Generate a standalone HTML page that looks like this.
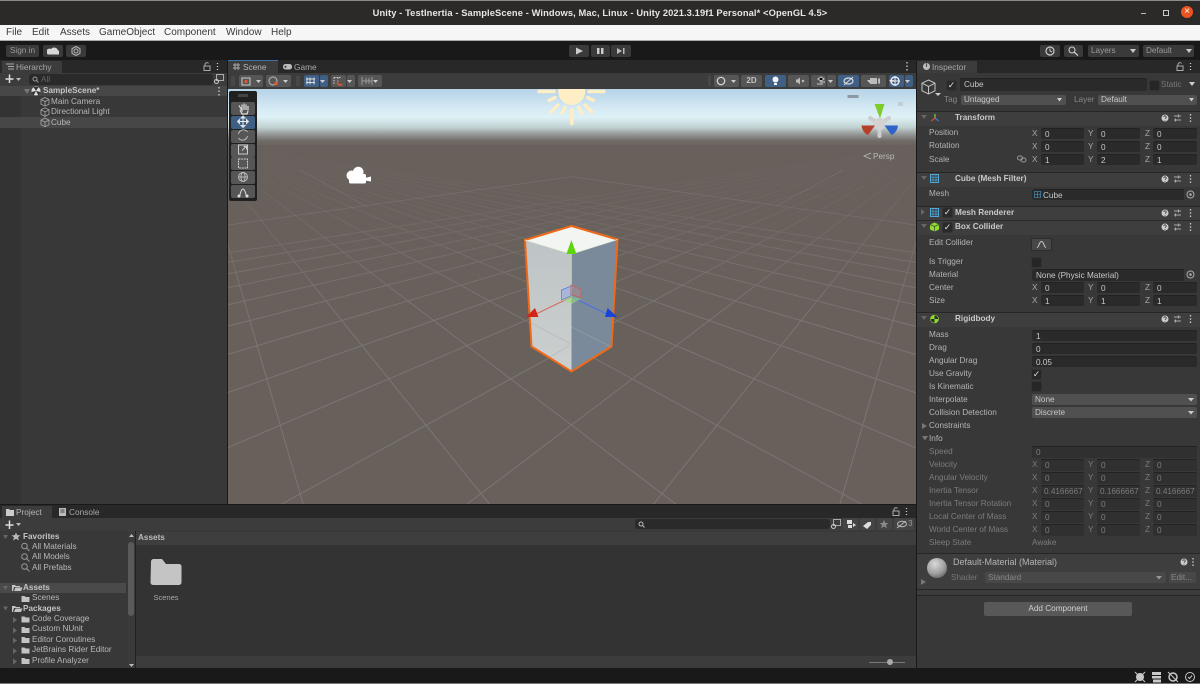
<!DOCTYPE html>
<html><head><meta charset="utf-8"><title>Unity</title>
<style>
html,body{margin:0;padding:0;background:#383838}
#r{position:relative;width:1200px;height:684px;overflow:hidden;background:#383838;font:8.2px/12px "Liberation Sans",sans-serif;color:#b4b4b4;filter:blur(.35px)}
#r div,#r svg{position:absolute}
.t{white-space:nowrap;height:12px}
.l{left:929px;color:#b4b4b4}
.h{left:955px;font-weight:bold;color:#c8c8c8}
.d{color:#7c7c7c}
.ax{color:#a8a8a8}
.f{background:#2a2a2a;height:11px;line-height:11px;border-radius:2px;padding-left:4px;color:#c8c8c8;white-space:nowrap;overflow:hidden;box-sizing:border-box;border-top:1px solid #222}
.x{left:1041px;width:43px}.y{left:1097px;width:43px}.z{left:1153px;width:44px}
.w{left:1032px;width:165px}
.g{color:#7c7c7c;background:#303030}
.dd{background:#505050;height:12px;line-height:12px;border-radius:2px;padding-left:3px;color:#c8c8c8;box-sizing:border-box}
.tb{background:#565656;border-radius:2px}
.hd{left:917px;width:283px;background:#3e3e3e;border-top:1px solid #262626}
.c{background:#262626;border:1px solid #333;box-sizing:border-box;width:11px;height:11px;border-radius:2px;color:#ddd;font-size:9px;line-height:9px;text-align:center}
.m{color:#3a3a3a;font-size:10px;top:26px;height:14px;line-height:14px;white-space:nowrap}
.tr{color:#b8b8b8;white-space:nowrap}
</style></head><body><div id="r">

<!-- Title bar -->
<div style="left:0;top:0;width:1200px;height:25px;background:#2c2a29;border-top:1px solid #8a8a8a;box-sizing:border-box"></div>
<div class="t" style="left:0;width:1200px;top:7px;text-align:center;color:#e6e6e6;font-weight:bold;font-size:9.33px;letter-spacing:.1px">Unity - TestInertia - SampleScene - Windows, Mac, Linux - Unity 2021.3.19f1 Personal* &lt;OpenGL 4.5&gt;</div>
<div style="left:1141px;top:13px;width:5px;height:1px;background:#bbb"></div>
<div style="left:1163px;top:10px;width:4px;height:4px;border:1px solid #ccc"></div>
<div style="left:1181px;top:6px;width:12px;height:12px;border-radius:50%;background:#e95420;color:#fff;font-size:10px;line-height:12px;text-align:center">×</div>

<!-- Menu -->
<div style="left:0;top:25px;width:1200px;height:16px;background:#f6f6f6;border-bottom:1px solid #aaa;box-sizing:border-box"></div>
<div class="m" style="left:6px">File</div><div class="m" style="left:32px">Edit</div><div class="m" style="left:60px">Assets</div><div class="m" style="left:99px">GameObject</div><div class="m" style="left:164px">Component</div><div class="m" style="left:226px">Window</div><div class="m" style="left:271px">Help</div>

<!-- Main toolbar -->
<div style="left:0;top:41px;width:1200px;height:19px;background:#191919"></div>
<div class="tb" style="left:6px;top:45px;width:33px;height:12px;background:#3a3a3a;text-align:center;line-height:12px;color:#999">Sign in</div>
<div class="tb" style="left:43px;top:45px;width:20px;height:12px;background:#3a3a3a"></div>
<svg style="left:47px;top:47px" width="12" height="8"><path d="M1 7.500h10a2 2 0 0 0 0-4 4 4 0 0 0-7-1.500a2.500 2.500 0 0 0-3 5.500z" fill="#d8d8d8"/></svg>
<div class="tb" style="left:66px;top:45px;width:20px;height:12px;background:#3a3a3a"></div>
<svg style="left:71px;top:46px" width="10" height="10"><path d="M5 .5l4 2.200v4.600l-4 2.200-4-2.200v-4.600z" fill="none" stroke="#bbb"/><circle cx="5" cy="5" r="2" fill="none" stroke="#bbb"/></svg>
<div class="tb" style="left:569px;top:45px;width:20px;height:12px;background:#3a3a3a"></div>
<div class="tb" style="left:591px;top:45px;width:19px;height:12px;background:#3a3a3a"></div>
<div class="tb" style="left:611px;top:45px;width:20px;height:12px;background:#3a3a3a"></div>
<svg style="left:569px;top:45px" width="62" height="12"><path d="M7 2.500l7 3.500-7 3.500z" fill="#ccc"/><path d="M28 3h2.500v6H28zM32 3h2.500v6H32z" fill="#ccc"/><path d="M48 3l5 3-5 3zM54 3h1.500v6H54z" fill="#bbb"/></svg>
<div class="tb" style="left:1040px;top:45px;width:20px;height:12px;background:#3a3a3a"></div>
<svg style="left:1045px;top:46px" width="10" height="10"><circle cx="5" cy="5" r="4" fill="none" stroke="#ccc" stroke-width="1.200"/><path d="M5 2.500V5l2 1" fill="none" stroke="#ccc"/></svg>
<div class="tb" style="left:1064px;top:45px;width:19px;height:12px;background:#3a3a3a"></div>
<svg style="left:1068px;top:46px" width="11" height="10"><circle cx="4" cy="4" r="3" fill="none" stroke="#ccc" stroke-width="1.100"/><path d="M6 6l4 3.500" stroke="#ccc" stroke-width="1.300"/></svg>
<div class="tb" style="left:1088px;top:45px;width:51px;height:12px;background:#3a3a3a;padding-left:3px;box-sizing:border-box;line-height:12px;color:#9a9a9a">Layers</div>
<div class="tb" style="left:1143px;top:45px;width:51px;height:12px;background:#3a3a3a;padding-left:3px;box-sizing:border-box;line-height:12px;color:#9a9a9a">Default</div>
<svg style="left:1130px;top:49px" width="66" height="5"><path d="M0 0h6l-3 4zM56 0h6l-3 4z" fill="#ccc"/></svg>

<!-- Hierarchy -->
<div style="left:0;top:60px;width:227px;height:13px;background:#282828"></div>
<div style="left:2px;top:61px;width:60px;height:12px;background:#3c3c3c"></div>
<svg style="left:6px;top:63px" width="8" height="7"><path d="M0 1h8M2 3.500h6M2 6h6" stroke="#aaa"/></svg>
<div class="t" style="left:16px;top:61px;color:#a8a8a8;font-size:8.3px">Hierarchy</div>
<svg style="left:203px;top:62px" width="17" height="9"><path d="M1 4h6v4.500H1z" fill="none" stroke="#aaa"/><path d="M2 4V2a2 2 0 0 1 3.500-.5" fill="none" stroke="#aaa"/><path d="M14.500 1v1M14.500 4v1M14.500 7v1" stroke="#ccc" stroke-width="1.300"/></svg>
<div style="left:0;top:73px;width:227px;height:13px;background:#3c3c3c"></div>
<svg style="left:5px;top:74px" width="18" height="10"><path d="M4.500.5v8.500M.5 5h8" stroke="#e0e0e0" stroke-width="1.500"/><path d="M11 4h5l-2.500 3z" fill="#bbb"/></svg>
<div style="left:29px;top:74px;width:184px;height:11px;background:#2a2a2a;border-radius:3px;color:#666;line-height:11px;padding-left:12px;box-sizing:border-box">All</div>
<svg style="left:32px;top:76px" width="7" height="7"><circle cx="3" cy="3" r="2" fill="none" stroke="#999"/><path d="M4.500 4.500l2 2" stroke="#999"/></svg>
<svg style="left:214px;top:74px" width="10" height="10"><rect x="2.500" y=".5" width="7" height="6" fill="none" stroke="#aaa"/><circle cx="2.500" cy="7.500" r="2" fill="none" stroke="#ccc"/></svg>
<div style="left:0;top:86px;width:227px;height:418px;background:#383838"></div>
<div style="left:0;top:86px;width:21px;height:418px;background:#333"></div>
<div style="left:0;top:86px;width:227px;height:10px;background:#474747"></div>
<div style="left:0;top:117px;width:227px;height:11px;background:#474747"></div>
<svg style="left:24px;top:89px" width="6" height="5"><path d="M0 0h6l-3 5z" fill="#777"/></svg>
<svg style="left:31px;top:86px" width="10" height="10"><circle cx="5" cy="5" r="4.500" fill="#ddd"/><path d="M5 5L2.500 1h5zM5 5l-4.500 1 2 3.500zM5 5l4.500 1-2 3.500z" fill="#333"/></svg>
<div class="t" style="left:43px;top:85px;font-weight:bold;color:#c4c4c4">SampleScene*</div>
<svg style="left:218px;top:87px" width="2" height="9"><path d="M1 0v1.500M1 3.500V5M1 7v1.500" stroke="#ccc" stroke-width="1.300"/></svg>
<svg style="left:40px;top:97px" width="10" height="32" fill="none" stroke="#aaa" stroke-width=".8"><path d="M5 .5l4 2v4.600l-4 2-4-2V2.500zM1 2.500l4 2 4-2M5 4.500v4.600"/><path d="M5 10.800l4 2v4.600l-4 2-4-2v-4.600zM1 12.800l4 2 4-2M5 14.800v4.600"/><path d="M5 21.100l4 2v4.600l-4 2-4-2v-4.600zM1 23.100l4 2 4-2M5 25.100v4.600"/></svg>
<div class="t tr" style="left:51px;top:96px">Main Camera</div>
<div class="t tr" style="left:51px;top:106px">Directional Light</div>
<div class="t tr" style="left:51px;top:117px">Cube</div>

<!-- Scene tabs -->
<div style="left:228px;top:60px;width:689px;height:13px;background:#282828"></div>
<div style="left:228px;top:60px;width:50px;height:13px;background:#3c3c3c;border-top:1px solid #3a72a8;box-sizing:border-box"></div>
<svg style="left:233px;top:63px" width="7" height="7"><path d="M2 0v7M5 0v7M0 2h7M0 5h7" stroke="#aaa"/></svg>
<div class="t" style="left:243px;top:61px;font-size:8.3px;color:#b8b8b8">Scene</div>
<svg style="left:283px;top:64px" width="9" height="6"><rect width="9" height="5.500" rx="2.500" fill="#bbb"/><circle cx="2.500" cy="2.700" r="1" fill="#333"/></svg>
<div class="t" style="left:294px;top:61px;font-size:8.3px;color:#a8a8a8">Game</div>
<svg style="left:906px;top:62px" width="2" height="9"><path d="M1 0v1.500M1 3.500V5M1 7v1.500" stroke="#ccc" stroke-width="1.300"/></svg>

<!-- Scene toolbar -->
<div style="left:228px;top:73px;width:689px;height:16px;background:#3c3c3c"></div>
<div class="tb" style="left:239px;top:75px;width:24px;height:12px"></div>
<div class="tb" style="left:266px;top:75px;width:25px;height:12px"></div>
<div class="tb" style="left:304px;top:75px;width:15px;height:12px;background:#3f5f85"></div>
<div class="tb" style="left:320px;top:75px;width:8px;height:12px;background:#3f5f85"></div>
<div class="tb" style="left:331px;top:75px;width:15px;height:12px"></div>
<div class="tb" style="left:347px;top:75px;width:8px;height:12px"></div>
<div class="tb" style="left:358px;top:75px;width:24px;height:12px"></div>
<svg style="left:228px;top:73px" width="160" height="16"><path d="M4 3v10M6 3v10M69 3v10M71 3v10" stroke="#555"/><rect x="14" y="5" width="8" height="7" fill="none" stroke="#ccc"/><circle cx="18" cy="8.500" r="1.600" fill="#e2572c"/><path d="M28 7h5l-2.500 3zM55 7h5l-2.500 3zM92 7h5l-2.500 3zM119 7h5l-2.500 3zM145 7h5l-2.500 3z" fill="#ccc"/><circle cx="45" cy="8" r="4" fill="none" stroke="#bbb"/><circle cx="48" cy="10.500" r="1.800" fill="#e2572c"/><path d="M79 4.500v7M82 4.500v7M86 4.500v7M78 6h9M78 9.500h9" stroke="#ddd"/><path d="M106 4.500h7M106 4.500v7M110 4.500v3" stroke="#ccc" stroke-dasharray="1.500 1"/><path d="M110 8a2.500 2.500 0 0 0 4 3" stroke="#e2572c" stroke-width="1.500" fill="none"/><path d="M134 4v8M144 4v8M134 8h10M138 5v6M141 5v6" stroke="#999"/></svg>

<div class="tb" style="left:714px;top:75px;width:25px;height:12px"></div>
<div class="tb" style="left:741px;top:75px;width:21px;height:12px;text-align:center;line-height:12px;color:#c4c4c4;font-weight:bold;font-size:8px">2D</div>
<div class="tb" style="left:765px;top:75px;width:21px;height:12px;background:#3f5f85"></div>
<div class="tb" style="left:788px;top:75px;width:21px;height:12px"></div>
<div class="tb" style="left:811px;top:75px;width:15px;height:12px"></div>
<div class="tb" style="left:827px;top:75px;width:9px;height:12px"></div>
<div class="tb" style="left:838px;top:75px;width:21px;height:12px;background:#3f5f85"></div>
<div class="tb" style="left:861px;top:75px;width:25px;height:12px"></div>
<div class="tb" style="left:889px;top:75px;width:15px;height:12px;background:#3f5f85"></div>
<div class="tb" style="left:905px;top:75px;width:8px;height:12px;background:#3f5f85"></div>
<svg style="left:708px;top:73px" width="209" height="16"><path d="M0 3v10M2 3v10" stroke="#555"/><circle cx="13" cy="8" r="3.700" fill="none" stroke="#ddd" stroke-width="1.200"/><path d="M23 7h5l-2.500 3zM181 7h5l-2.500 3zM159 7h5l-2.500 3zM120 7h5l-2.500 3zM197 7h5l-2.500 3z" fill="#ccc"/><circle cx="67.500" cy="6.500" r="3" fill="#f4f4f4"/><rect x="66" y="10" width="3" height="2" fill="#f4f4f4"/><path d="M88 6.500h1.500L92 4.500v7l-2.500-2H88z" fill="#bbb"/><path d="M94 7l2 2M96 7l-2 2" stroke="#bbb"/><path d="M110 6l3-2 3 2-3 2zM112 9h5M109 11h6" stroke="#ccc"/><ellipse cx="140.500" cy="8" rx="4.500" ry="3" fill="none" stroke="#ddd" stroke-width="1.200"/><path d="M136 12l9-8" stroke="#ddd"/><rect x="162" y="5" width="7" height="6" fill="#bbb"/><path d="M170 6l2-1v6l-2-1z" fill="#bbb"/><circle cx="187" cy="8" r="4" fill="none" stroke="#eee" stroke-width="1.400"/><path d="M187 3v10M182 8h10" stroke="#eee"/></svg>

<!-- Scene view -->
<svg style="left:228px;top:89px" width="688" height="415" viewBox="228 89 688 415">
<defs><linearGradient id="sky" x1="0" y1="0" x2="0" y2="1"><stop offset="0" stop-color="#b6d3e8"/><stop offset=".33" stop-color="#d4e9f3"/><stop offset=".5" stop-color="#def2f6"/><stop offset=".68" stop-color="#c3d3d4"/><stop offset=".8" stop-color="#979c9b"/><stop offset=".93" stop-color="#706a67"/><stop offset="1" stop-color="#6b6460"/></linearGradient>
<linearGradient id="lf" x1="0" y1="0" x2="0" y2="1"><stop offset="0" stop-color="#bec4c6"/><stop offset="1" stop-color="#cbcfce"/></linearGradient>
<linearGradient id="gl" gradientUnits="userSpaceOnUse" x1="0" y1="145" x2="0" y2="320"><stop offset="0" stop-color="#807a76" stop-opacity="0"/><stop offset=".3" stop-color="#807a76" stop-opacity=".22"/><stop offset=".6" stop-color="#807a76" stop-opacity=".5"/><stop offset="1" stop-color="#807a76" stop-opacity=".8"/></linearGradient>
<linearGradient id="gm" gradientUnits="userSpaceOnUse" x1="0" y1="150" x2="0" y2="320"><stop offset="0" stop-color="#7a7470" stop-opacity="0"/><stop offset=".45" stop-color="#7a7470" stop-opacity=".22"/><stop offset="1" stop-color="#7a7470" stop-opacity="0"/></linearGradient></defs>
<rect x="228" y="89" width="688" height="415" fill="#68605b"/>
<rect x="228" y="89" width="688" height="56" fill="url(#sky)"/>
<!-- minor grid -->
<path stroke="url(#gm)" stroke-width=".8" fill="none" d="M198 141.700L217 700M198 141.700L503 700M198 141.700L790 700M198 141.700L1077 700M198 141.700L1364 700M198 141.700L1651 700M198 141.700L1937 700M198 141.700L2224 700M198 141.700L2511 700M198 141.700L2798 700M945 141.700L926 700M945 141.700L640 700M945 141.700L353 700M945 141.700L66 700M945 141.700L-221 700M945 141.700L-508 700M945 141.700L-794 700M945 141.700L-1081 700M945 141.700L-1368 700M945 141.700L-1655 700"/>
<!-- major grid -->
<path stroke="url(#gl)" stroke-width="1" fill="none" d="M198 141.700L-500 700M198 141.700L-214 700M198 141.700L73 700M198 141.700L360 700M198 141.700L647 700M198 141.700L934 700M198 141.700L1220 700M198 141.700L1507 700M198 141.700L1794 700M198 141.700L2081 700M198 141.700L2368 700M198 141.700L2654 700M198 141.700L2941 700M198 141.700L3228 700M198 141.700L3515 700M198 141.700L3802 700M945 141.700L1643 700M945 141.700L1357 700M945 141.700L1070 700M945 141.700L783 700M945 141.700L496 700M945 141.700L209 700M945 141.700L-77 700M945 141.700L-364 700M945 141.700L-651 700M945 141.700L-938 700M945 141.700L-1225 700M945 141.700L-1511 700M945 141.700L-1798 700M945 141.700L-2085 700M945 141.700L-2372 700M945 141.700L-2659 700"/>
<path d="M228 225L571.500 176.700 916 225M300 170L366 206M843 170L776 206" stroke="#7d7773" stroke-width=".9" fill="none" opacity=".6"/>
<!-- cube -->
<path d="M525 240L571.500 254V371.500L531.500 346.500z" fill="url(#lf)"/>
<path d="M617.500 239.500L571.500 254V371.500L611.500 346.500z" fill="#7b8a9a"/>
<path d="M571.500 226L617.500 239.500 571.500 254 525 240z" fill="#f2f5f1"/>
<path d="M531 323l39 20.500M550 357l20-12M571.500 327l40 20" stroke="#a0a5a8" stroke-width=".7" opacity=".6" fill="none"/>
<path d="M571.500 226L617.500 239.500 611.500 346.500 571.500 371.500 531.500 346.500 525 240z" fill="none" stroke="#f0691a" stroke-width="2"/>
<path d="M525 240L571.500 254 617.500 239.500" fill="none" stroke="#e4f0dc" stroke-width=".8"/>
<!-- move gizmo -->
<path d="M571.400 254V297" stroke="#a2e08a" stroke-width="1"/>
<path d="M571.400 297L534 315" stroke="#d66a62" stroke-width="1"/>
<path d="M571.400 297L609 315" stroke="#4b6fe4" stroke-width="1"/>
<path d="M571.400 240l5 14h-10z" fill="#5fd60c"/>
<path d="M526 317l9-9 3.500 9z" fill="#d42319"/>
<path d="M617.500 317l-10-9-2.500 9z" fill="#1a43d8"/>
<path d="M561.500 290l9.500-4v10l-9.500 4z" fill="#8fa3e8" fill-opacity=".5" stroke="#5b73e0" stroke-width=".7"/>
<path d="M571 285l10 4.500v8l-10-3z" fill="#cf8f8a" fill-opacity=".3" stroke="#d15b52" stroke-width=".7"/>
<path d="M562 300l9.500-4 9.500 3-9.500 5z" fill="#9be07a" fill-opacity=".55"/>
<!-- sun -->
<g stroke="#fdeec6" stroke-width="3.400" stroke-linecap="round" fill="none">
<path d="M539 91.500h15M589 91.500h15M549 100.500l6-3M587.500 97.500l6 3M551 112l7-7M585 105l7 7M562 113l3-6M578.500 107l3 6M571.700 110v13.500"/></g>
<circle cx="571.700" cy="91.500" r="13.500" fill="#fdeec6"/>
<!-- camera icon -->
<g fill="#fff"><circle cx="351.500" cy="175.500" r="5"/><circle cx="358.300" cy="172" r="5.300"/><rect x="349" y="174" width="17" height="9.500" rx="1.500"/><path d="M365 178l6-1.500v5l-6-1z"/></g>
<!-- view gizmo -->
<rect x="847.500" y="95" width="11" height="3" fill="#8c99a3"/>
<g stroke="#cdcdcd" stroke-width="4" stroke-linecap="round"><path d="M879.500 124L870 118M879.500 124L889 118M879.500 124V136"/></g>
<circle cx="879.500" cy="124" r="6" fill="#d2d2d2"/>
<path d="M874.500 104h10L880 118.500z" fill="#7ecb2a"/>
<path d="M861.500 125.500l13.500 0-7 9.500c-3-1-6-5-6.500-9.500z" fill="#b5402a"/>
<path d="M898 125.500l-13.500 0 7 9.500c3-1 6-5 6.500-9.500z" fill="#2d62c9"/>
<path d="M876 100l2 3 2-3" stroke="#c8d6da" fill="none" stroke-width=".8"/>
<rect x="898" y="102" width="5" height="4" fill="#c4cdd0"/>
<path d="M871 153l-7 3 7 3" stroke="#bbb" fill="none" stroke-width=".8"/>
<text x="873" y="159" font-family="Liberation Sans" font-size="8.200" fill="#bdb9b6">Persp</text>
</svg>

<!-- Tools overlay -->
<div style="left:229px;top:91px;width:28px;height:110px;background:#202020;border-radius:2px"></div>
<div style="left:238px;top:94px;width:10px;height:3px;background:#444"></div>
<div class="tb" style="left:231px;top:102px;width:24px;height:13px"></div>
<div class="tb" style="left:231px;top:116px;width:24px;height:13px;background:#3f5f85"></div>
<div class="tb" style="left:231px;top:130px;width:24px;height:13px"></div>
<div class="tb" style="left:231px;top:143.500px;width:24px;height:13px"></div>
<div class="tb" style="left:231px;top:157px;width:24px;height:13px"></div>
<div class="tb" style="left:231px;top:170.500px;width:24px;height:13px"></div>
<div class="tb" style="left:231px;top:185px;width:24px;height:13px"></div>
<svg style="left:231px;top:102px" width="24" height="96" fill="none" stroke="#ddd">
<path d="M8 3.500l3 5V2.500M13 8V1.500M15 8V2.500M17 8.500V4M9 8l2 4h5l1-3" stroke-width="1.200"/>
<path d="M12 15.500v8M8 19.500h8" stroke="#eee"/><path d="M12 14l-2 2h4zM12 25.500l-2-2h4zM6.500 19.500l2-2v4zM17.500 19.500l-2-2v4z" fill="#eee"/>
<path d="M16.500 30a5 5 0 0 0-9 2M7.500 36a5 5 0 0 0 9-2" stroke="#bbb"/>
<rect x="7.500" y="43" width="9" height="9" stroke="#ccc"/><path d="M11 48.500l4-4M12.500 44.500H15.500V47.500" stroke="#ccc"/>
<rect x="7.500" y="57" width="9" height="9" stroke="#ccc" stroke-dasharray="2 .7"/>
<circle cx="12" cy="75" r="4.500" stroke="#bbb"/><ellipse cx="12" cy="75" rx="2" ry="4.500" stroke="#bbb"/><path d="M7.500 75h9" stroke="#bbb"/>
<path d="M8 94c1.500 0 1.500-7 4-7s2.500 7 4 7" stroke="#ddd"/><circle cx="8" cy="94" r="1" fill="#ddd"/><circle cx="16" cy="94" r="1" fill="#ddd"/>
</svg>

<!-- Divider lines -->
<div style="left:227px;top:60px;width:1px;height:445px;background:#191919"></div>
<div style="left:916px;top:60px;width:1px;height:608px;background:#191919"></div>
<div style="left:0;top:504px;width:916px;height:1px;background:#191919"></div>

<!-- Project panel -->
<div style="left:0;top:505px;width:916px;height:13px;background:#282828"></div>
<div style="left:2px;top:506px;width:50px;height:12px;background:#3c3c3c"></div>
<svg style="left:6px;top:509px" width="8" height="7"><path d="M0 0h3l1 1h4v6H0z" fill="#ccc"/></svg>
<div class="t" style="left:16px;top:506px;font-size:8.3px;color:#b8b8b8">Project</div>
<svg style="left:59px;top:508px" width="7" height="8"><path d="M0 0h7v8H0z" fill="#bbb"/><path d="M1.500 2h4M1.500 4h4" stroke="#444"/></svg>
<div class="t" style="left:69px;top:506px;font-size:8.3px;color:#a8a8a8">Console</div>
<svg style="left:892px;top:507px" width="17" height="9"><path d="M1 4h6v4.500H1z" fill="none" stroke="#aaa"/><path d="M2 4V2a2 2 0 0 1 3.500-.5" fill="none" stroke="#aaa"/><path d="M14.500 1v1M14.500 4v1M14.500 7v1" stroke="#ccc" stroke-width="1.300"/></svg>
<div style="left:0;top:518px;width:916px;height:13px;background:#3c3c3c"></div>
<svg style="left:5px;top:520px" width="18" height="10"><path d="M4.500.5v8.500M.5 5h8" stroke="#e0e0e0" stroke-width="1.500"/><path d="M11 3h5l-2.500 3z" fill="#bbb"/></svg>
<div style="left:635px;top:519px;width:195px;height:10px;background:#2a2a2a;border-radius:3px"></div>
<svg style="left:638px;top:521px" width="7" height="7"><circle cx="3" cy="3" r="2" fill="none" stroke="#bbb"/><path d="M4.500 4.500l2 2" stroke="#bbb"/></svg>
<svg style="left:831px;top:519px" width="10" height="10"><rect x="2.500" y=".5" width="7" height="6" fill="none" stroke="#aaa"/><circle cx="2.500" cy="7.500" r="2" fill="none" stroke="#ccc"/></svg>
<div class="tb" style="left:843px;top:518px;width:15px;height:12px;background:#444"></div>
<div class="tb" style="left:860px;top:518px;width:15px;height:12px;background:#444"></div>
<div class="tb" style="left:877px;top:518px;width:15px;height:12px;background:#444"></div>
<div class="tb" style="left:894px;top:518px;width:20px;height:12px;background:#444"></div>
<svg style="left:843px;top:518px" width="73" height="12"><path d="M4 2h5v4H4zM10 5l3 2-3 2zM5 7h4v3H5z" fill="#ddd"/><path d="M20 8l5-4h3v3l-4 4z" fill="#ddd"/><path d="M41 2l1.500 3h3l-2.500 2 1 3.200-3-1.700-3 1.700 1-3.200-2.500-2h3z" fill="#888"/><ellipse cx="59" cy="6" rx="4.500" ry="2.800" fill="none" stroke="#bbb"/><path d="M54 10l9-7" stroke="#bbb"/></svg>
<div class="t" style="left:908px;top:518px;color:#999">3</div>
<!-- tree -->
<div style="left:0;top:531px;width:128px;height:137px;background:#383838"></div>
<div style="left:0;top:583px;width:126px;height:10px;background:#4a4a4a"></div>
<div style="left:128px;top:531px;width:7px;height:137px;background:#3a3a3a"></div>
<div style="left:128px;top:542px;width:6px;height:74px;background:#5a5a5a;border-radius:3px"></div>
<svg style="left:129px;top:534px" width="5" height="133"><path d="M2.500 0l2.500 3H0zM0 130h5l-2.500 3z" fill="#bbb"/></svg>
<svg style="left:3px;top:532px" width="60" height="136">
<path d="M0 3h5l-2.500 4zM0 54h5l-2.500 4zM0 74.500h5l-2.500 4z" fill="#666"/>
<path d="M13 .5l1.300 2.800h3.200l-2.500 2 .9 3.200-2.900-1.800-2.900 1.800.9-3.200-2.500-2h3.200z" fill="#bbb"/>
<g fill="none" stroke="#999"><circle cx="21.500" cy="14" r="2.800"/><path d="M23.500 16l3 3"/><circle cx="21.500" cy="24.500" r="2.800"/><path d="M23.500 26.500l3 3"/><circle cx="21.500" cy="34.500" r="2.800"/><path d="M23.500 36.500l3 3"/></g>
<path d="M9 53h3l1 1h4v1h-6l-1 4H9zM11 59l1.500-3.500h7L18 59z" fill="#c4c4c4"/>
<path d="M18.500 64h3l1 1h4v5h-8z" fill="#c4c4c4"/>
<path d="M9 74h3l1 1h4v1h-6l-1 4H9zM11 80l1.500-3.500h7L18 80z" fill="#c4c4c4"/>
<g fill="#c4c4c4"><path d="M18.500 84.500h3l1 1h4v5h-8zM18.500 95h3l1 1h4v5h-8zM18.500 105h3l1 1h4v5h-8zM18.500 115.500h3l1 1h4v5h-8zM18.500 126h3l1 1h4v5h-8z"/></g>
<g fill="#666"><path d="M10 85l4 3-4 3zM10 95.500l4 3-4 3zM10 105.500l4 3-4 3zM10 116l4 3-4 3zM10 126.500l4 3-4 3z"/></g>
</svg>
<div class="t" style="left:23px;top:531px;font-weight:bold;color:#c4c4c4">Favorites</div>
<div class="t tr" style="left:32px;top:541px">All Materials</div>
<div class="t tr" style="left:32px;top:551px">All Models</div>
<div class="t tr" style="left:32px;top:562px">All Prefabs</div>
<div class="t" style="left:23px;top:582px;font-weight:bold;color:#c4c4c4">Assets</div>
<div class="t tr" style="left:32px;top:592px">Scenes</div>
<div class="t" style="left:23px;top:603px;font-weight:bold;color:#c4c4c4">Packages</div>
<div class="t tr" style="left:32px;top:613px">Code Coverage</div>
<div class="t tr" style="left:32px;top:623px">Custom NUnit</div>
<div class="t tr" style="left:32px;top:634px">Editor Coroutines</div>
<div class="t tr" style="left:32px;top:644px">JetBrains Rider Editor</div>
<div class="t tr" style="left:32px;top:655px">Profile Analyzer</div>
<div style="left:0;top:668px;width:1200px;height:16px;background:#191919"></div>
<!-- grid area -->
<div style="left:135px;top:531px;width:1px;height:137px;background:#222"></div>
<div style="left:136px;top:532px;width:780px;height:13px;background:#3e3e3e"></div>
<div class="t" style="left:138px;top:532px;font-weight:bold;color:#bcbcbc">Assets</div>
<div style="left:136px;top:545px;width:780px;height:111px;background:#333"></div>
<svg style="left:150px;top:559px" width="32" height="27"><path d="M1 3a3 3 0 0 1 2-3h9l4 5h13a2.500 2.500 0 0 1 2.500 2.500v16a2.500 2.500 0 0 1-2.500 2.500H3a2.500 2.500 0 0 1-2.500-2.500z" fill="#c4c4c4"/></svg>
<div class="t" style="left:153.500px;top:592px;font-size:7.500px;color:#a8a8a8">Scenes</div>
<div style="left:136px;top:656px;width:780px;height:12px;background:#3c3c3c"></div>
<div style="left:869px;top:662px;width:36px;height:1px;background:#777"></div>
<div style="left:887px;top:659px;width:6px;height:6px;border-radius:50%;background:#aaa"></div>

<!-- Inspector -->
<div style="left:917px;top:60px;width:283px;height:13px;background:#282828"></div>
<div style="left:917px;top:61px;width:60px;height:12px;background:#3c3c3c"></div>
<div style="left:923px;top:63px;width:7px;height:7px;border-radius:50%;background:#bbb;color:#333;font-size:6px;line-height:7px;text-align:center;font-weight:bold">i</div>
<div class="t" style="left:932px;top:61px;font-size:8.3px;color:#a8a8a8">Inspector</div>
<svg style="left:1176px;top:62px" width="17" height="9"><path d="M1 4h6v4.500H1z" fill="none" stroke="#aaa"/><path d="M2 4V2a2 2 0 0 1 3.500-.5" fill="none" stroke="#aaa"/><path d="M14.500 1v1M14.500 4v1M14.500 7v1" stroke="#ccc" stroke-width="1.300"/></svg>
<svg style="left:921px;top:79px" width="20" height="19" fill="none" stroke="#c4c4c4"><path d="M7.500 1l6.500 3.200v7.600L7.500 15 1 11.800V4.200zM1 4.200l6.500 3.200L14 4.200M7.500 7.400V15"/><path d="M14 14h6l-3 3z" fill="#ccc" stroke="none"/></svg>
<div class="c" style="left:946px;top:80px;color:#ddd;background:#2a2a2a">✓</div>
<div class="f" style="left:960px;top:78px;width:187px;height:13px;line-height:12px;color:#c8c8c8">Cube</div>
<div class="c" style="left:1149px;top:80px">&nbsp;</div>
<div class="t" style="left:1161px;top:79px;color:#777">Static</div>
<svg style="left:1189px;top:82px" width="6" height="4"><path d="M0 0h6l-3 4z" fill="#ccc"/></svg>
<div class="t" style="left:944px;top:94px;color:#888;">Tag</div>
<div class="dd" style="left:961px;top:95px;width:105px;height:10px;line-height:10px">Untagged</div>
<div class="t" style="left:1074px;top:94px;color:#888">Layer</div>
<div class="dd" style="left:1098px;top:95px;width:99px;height:10px;line-height:10px">Default</div>
<svg style="left:1057px;top:98px" width="140" height="4"><path d="M0 0h5l-2.500 3.500zM132 0h5l-2.500 3.500z" fill="#ccc"/></svg>

<!-- Transform -->
<div class="hd" style="top:111px;height:14px"></div>
<svg style="left:920px;top:113px" width="20" height="10"><path d="M1 2h6L4 6z" fill="#666"/><path d="M15 5V1" stroke="#7ccb2c" stroke-width="1.300"/><path d="M15 5l-3.500 3" stroke="#d44" stroke-width="1.300"/><path d="M15 5l3.500 3" stroke="#3a7bd5" stroke-width="1.300"/></svg>
<div class="t h" style="top:112px">Transform</div>
<div class="t l" style="top:127px">Position</div>
<div class="t l" style="top:140px">Rotation</div>
<div class="t l" style="top:154px">Scale</div>
<svg style="left:1017px;top:155px" width="10" height="8" fill="none" stroke="#999"><rect x=".5" y="1" width="5" height="4" rx="2"/><rect x="4" y="3" width="5" height="4" rx="2"/></svg>
<div class="t ax" style="left:1032px;top:127.500px">X</div><div class="f x" style="top:128px">0</div><div class="t ax" style="left:1088px;top:127.500px">Y</div><div class="f y" style="top:128px">0</div><div class="t ax" style="left:1145px;top:127.500px">Z</div><div class="f z" style="top:128px">0</div>
<div class="t ax" style="left:1032px;top:140.500px">X</div><div class="f x" style="top:141px">0</div><div class="t ax" style="left:1088px;top:140.500px">Y</div><div class="f y" style="top:141px">0</div><div class="t ax" style="left:1145px;top:140.500px">Z</div><div class="f z" style="top:141px">0</div>
<div class="t ax" style="left:1032px;top:153.500px">X</div><div class="f x" style="top:154px">1</div><div class="t ax" style="left:1088px;top:153.500px">Y</div><div class="f y" style="top:154px">2</div><div class="t ax" style="left:1145px;top:153.500px">Z</div><div class="f z" style="top:154px">1</div>

<!-- Mesh filter -->
<div class="hd" style="top:172px;height:14px"></div>
<svg style="left:920px;top:174px" width="20" height="10"><path d="M1 2h6L4 6z" fill="#666"/><rect x="10.500" y=".5" width="8" height="8" fill="none" stroke="#4fa8d8"/><path d="M13 .5v8M16 .5v8M10.500 3.200h8M10.500 6h8" stroke="#4fa8d8" stroke-width=".7"/></svg>
<div class="t h" style="top:173px">Cube (Mesh Filter)</div>
<div class="t l" style="top:188px">Mesh</div>
<div class="f w" style="top:189px;padding-left:11px;height:11px;border-radius:3px;background:#2a2a2a">Cube</div>
<svg style="left:1034px;top:191px" width="7" height="7"><path d="M0 .5h7M0 3.500h7M0 6.500h7M.5 0v7M3.500 0v7M6.500 0v7" stroke="#3f7fa6" stroke-width=".8"/></svg>
<div style="left:1184px;top:189px;width:13px;height:11px;background:#383838"></div>
<svg style="left:1186px;top:190px" width="9" height="9"><circle cx="4.500" cy="4.500" r="3.500" fill="none" stroke="#aaa"/><circle cx="4.500" cy="4.500" r="1.300" fill="#aaa"/></svg>

<!-- Mesh renderer -->
<div class="hd" style="top:206px;height:14px"></div>
<svg style="left:920px;top:208px" width="20" height="10"><path d="M1 1l4 3-4 3z" fill="#666"/><rect x="10.500" y=".5" width="8" height="8" fill="none" stroke="#4fa8d8"/><path d="M13 .5v8M16 .5v8M10.500 3.200h8M10.500 6h8" stroke="#4fa8d8" stroke-width=".7"/></svg>
<div class="c" style="left:942px;top:207px;background:#2a2a2a">✓</div>
<div class="t h" style="top:207px">Mesh Renderer</div>

<!-- Box collider -->
<div class="hd" style="top:220px;height:14px;border-top:1px solid #2a2a2a"></div>
<svg style="left:920px;top:222px" width="20" height="10"><path d="M1 2h6L4 6z" fill="#666"/><path d="M14.500 .5l4.500 2v5l-4.500 2-4.500-2v-5z" fill="#8fdc2c"/><path d="M10 2.500l4.500 2 4.500-2M14.500 4.500v5" stroke="#3e3e3e" stroke-width=".7" fill="none"/></svg>
<div class="c" style="left:942px;top:222px;background:#2a2a2a">✓</div>
<div class="t h" style="top:221px">Box Collider</div>
<div class="t l" style="top:237px">Edit Collider</div>
<div class="tb" style="left:1031px;top:238px;width:21px;height:13px;background:#484848;border:1px solid #2c2c2c;box-sizing:border-box"></div>
<svg style="left:1036px;top:240px" width="11" height="9" fill="none" stroke="#ccc"><path d="M1 7.500c2 0 2-6 4.500-6s2.500 6 4.500 6"/></svg>
<div class="t l" style="top:256px">Is Trigger</div>
<div class="c" style="left:1031px;top:257px">&nbsp;</div>
<div class="t l" style="top:269px">Material</div>
<div class="f w" style="top:269px;height:12px;line-height:11px;border-radius:3px">None (Physic Material)</div>
<div style="left:1184px;top:269px;width:13px;height:12px;background:#383838"></div>
<svg style="left:1186px;top:270px" width="9" height="9"><circle cx="4.500" cy="4.500" r="3.500" fill="none" stroke="#aaa"/><circle cx="4.500" cy="4.500" r="1.300" fill="#aaa"/></svg>
<div class="t l" style="top:281.500px">Center</div>
<div class="t l" style="top:294.500px">Size</div>
<div class="t ax" style="left:1032px;top:281.500px">X</div><div class="f x" style="top:282px">0</div><div class="t ax" style="left:1088px;top:281.500px">Y</div><div class="f y" style="top:282px">0</div><div class="t ax" style="left:1145px;top:281.500px">Z</div><div class="f z" style="top:282px">0</div>
<div class="t ax" style="left:1032px;top:294.500px">X</div><div class="f x" style="top:295px">1</div><div class="t ax" style="left:1088px;top:294.500px">Y</div><div class="f y" style="top:295px">1</div><div class="t ax" style="left:1145px;top:294.500px">Z</div><div class="f z" style="top:295px">1</div>

<!-- Rigidbody -->
<div class="hd" style="top:312px;height:14px"></div>
<svg style="left:920px;top:314px" width="20" height="10"><path d="M1 2h6L4 6z" fill="#666"/><circle cx="14.500" cy="5" r="4.300" fill="#8fdc2c"/><path d="M14.500 5V1.300A3.700 3.700 0 0 1 18.200 5zM14.500 5v3.700A3.700 3.700 0 0 1 10.800 5z" fill="#2d2d2d"/></svg>
<div class="t h" style="top:313px">Rigidbody</div>
<div class="t l" style="top:329px">Mass</div><div class="f w" style="top:329.500px;height:11px">1</div>
<div class="t l" style="top:342px">Drag</div><div class="f w" style="top:342.500px;height:11px">0</div>
<div class="t l" style="top:355px">Angular Drag</div><div class="f w" style="top:355.500px;height:11px">0.05</div>
<div class="t l" style="top:368px">Use Gravity</div><div class="c" style="left:1031px;top:369px">✓</div>
<div class="t l" style="top:381px">Is Kinematic</div><div class="c" style="left:1031px;top:381px">&nbsp;</div>
<div class="t l" style="top:394px">Interpolate</div><div class="dd" style="left:1032px;top:394px;width:165px;height:11px;line-height:11px">None</div>
<div class="t l" style="top:407px">Collision Detection</div><div class="dd" style="left:1032px;top:407px;width:165px;height:11px;line-height:11px">Discrete</div>
<svg style="left:1188px;top:398px" width="6" height="17"><path d="M0 0h6l-3 3.500zM0 13h6l-3 3.500z" fill="#ccc"/></svg>
<svg style="left:922px;top:423px" width="6" height="19"><path d="M0 0l5 3-5 3z" fill="#777"/><path d="M0 13h6l-3 4.500z" fill="#777"/></svg>
<div class="t l" style="top:420px">Constraints</div>
<div class="t l" style="top:433px">Info</div>
<div class="t l d" style="top:446px">Speed</div><div class="f w g" style="top:446px;height:12px">0</div>
<div class="t l d" style="top:459px">Velocity</div>
<div class="t l d" style="top:472px">Angular Velocity</div>
<div class="t l d" style="top:485px">Inertia Tensor</div>
<div class="t l d" style="top:498px">Inertia Tensor Rotation</div>
<div class="t l d" style="top:511px">Local Center of Mass</div>
<div class="t l d" style="top:524px">World Center of Mass</div>
<div class="t l d" style="top:537px">Sleep State</div>
<div class="t d" style="left:1032px;top:537px">Awake</div>
<div class="t d" style="left:1032px;top:459px">X</div><div class="f x g" style="top:459px;height:12px">0</div><div class="t d" style="left:1088px;top:459px">Y</div><div class="f y g" style="top:459px;height:12px">0</div><div class="t d" style="left:1145px;top:459px">Z</div><div class="f z g" style="top:459px;height:12px">0</div>
<div class="t d" style="left:1032px;top:472px">X</div><div class="f x g" style="top:472px;height:12px">0</div><div class="t d" style="left:1088px;top:472px">Y</div><div class="f y g" style="top:472px;height:12px">0</div><div class="t d" style="left:1145px;top:472px">Z</div><div class="f z g" style="top:472px;height:12px">0</div>
<div class="t d" style="left:1032px;top:485px">X</div><div class="f x g" style="top:485px;height:12px;padding-left:3px">0.4166667</div><div class="t d" style="left:1088px;top:485px">Y</div><div class="f y g" style="top:485px;height:12px;padding-left:3px">0.1666667</div><div class="t d" style="left:1145px;top:485px">Z</div><div class="f z g" style="top:485px;height:12px;padding-left:3px">0.4166667</div>
<div class="t d" style="left:1032px;top:498px">X</div><div class="f x g" style="top:498px;height:12px">0</div><div class="t d" style="left:1088px;top:498px">Y</div><div class="f y g" style="top:498px;height:12px">0</div><div class="t d" style="left:1145px;top:498px">Z</div><div class="f z g" style="top:498px;height:12px">0</div>
<div class="t d" style="left:1032px;top:511px">X</div><div class="f x g" style="top:511px;height:12px">0</div><div class="t d" style="left:1088px;top:511px">Y</div><div class="f y g" style="top:511px;height:12px">0</div><div class="t d" style="left:1145px;top:511px">Z</div><div class="f z g" style="top:511px;height:12px">0</div>
<div class="t d" style="left:1032px;top:524px">X</div><div class="f x g" style="top:524px;height:12px">0</div><div class="t d" style="left:1088px;top:524px">Y</div><div class="f y g" style="top:524px;height:12px">0</div><div class="t d" style="left:1145px;top:524px">Z</div><div class="f z g" style="top:524px;height:12px">0</div>

<!-- Material -->
<div style="left:917px;top:553px;width:283px;height:37px;background:#3e3e3e;border-top:1px solid #262626;border-bottom:1px solid #262626;box-sizing:border-box"></div>
<div style="left:917px;top:590px;width:283px;height:6px;background:#3c3c3c;border-bottom:1px solid #262626;box-sizing:border-box"></div>
<svg style="left:926px;top:557px" width="22" height="22"><defs><radialGradient id="sp" cx=".4" cy=".3" r=".8"><stop offset="0" stop-color="#d8d8d8"/><stop offset=".6" stop-color="#a0a0a0"/><stop offset="1" stop-color="#5c5c5c"/></radialGradient></defs><circle cx="11" cy="11" r="10" fill="url(#sp)"/></svg>
<svg style="left:921px;top:579px" width="6" height="7"><path d="M0 0l5 3-5 3z" fill="#777"/></svg>
<div class="t" style="left:953px;top:556px;font-size:9px;color:#b4b4b4">Default-Material (Material)</div>
<div class="t" style="left:951px;top:572px;color:#777">Shader</div>
<div class="dd" style="left:985px;top:572px;width:181px;height:11px;line-height:11px;background:#484848;color:#888">Standard</div>
<svg style="left:1156px;top:576px" width="6" height="4"><path d="M0 0h6l-3 3.500z" fill="#999"/></svg>
<div class="dd" style="left:1169px;top:572px;width:27px;height:11px;line-height:11px;background:#484848;color:#888;padding-left:2px">Edit...</div>
<div class="tb" style="left:984px;top:602px;width:148px;height:14px;background:#585858;color:#d0d0d0;text-align:center;line-height:14px">Add Component</div>

<!-- Inspector header icons -->
<svg style="left:1160px;top:113px" width="36" height="10"><circle cx="5" cy="5" r="3.500" fill="#ccc"/><path d="M3.800 4a1.200 1.200 0 1 1 1.700 1.100L5 5.800M5 7v.7" stroke="#3e3e3e" stroke-width=".8" fill="none"/><path d="M14 3h7M14 7h7M18.500 1.500v3M15.500 5.500v3" stroke="#aaa"/><path d="M30.500 1v1.500M30.500 4.200v1.500M30.500 7.500V9" stroke="#ccc" stroke-width="1.300"/></svg>
<svg style="left:1160px;top:174px" width="36" height="10"><circle cx="5" cy="5" r="3.500" fill="#ccc"/><path d="M3.800 4a1.200 1.200 0 1 1 1.700 1.100L5 5.800M5 7v.7" stroke="#3e3e3e" stroke-width=".8" fill="none"/><path d="M14 3h7M14 7h7M18.500 1.500v3M15.500 5.500v3" stroke="#aaa"/><path d="M30.500 1v1.500M30.500 4.200v1.500M30.500 7.500V9" stroke="#ccc" stroke-width="1.300"/></svg>
<svg style="left:1160px;top:208px" width="36" height="10"><circle cx="5" cy="5" r="3.500" fill="#ccc"/><path d="M3.800 4a1.200 1.200 0 1 1 1.700 1.100L5 5.800M5 7v.7" stroke="#3e3e3e" stroke-width=".8" fill="none"/><path d="M14 3h7M14 7h7M18.500 1.500v3M15.500 5.500v3" stroke="#aaa"/><path d="M30.500 1v1.500M30.500 4.200v1.500M30.500 7.500V9" stroke="#ccc" stroke-width="1.300"/></svg>
<svg style="left:1160px;top:222px" width="36" height="10"><circle cx="5" cy="5" r="3.500" fill="#ccc"/><path d="M3.800 4a1.200 1.200 0 1 1 1.700 1.100L5 5.800M5 7v.7" stroke="#3e3e3e" stroke-width=".8" fill="none"/><path d="M14 3h7M14 7h7M18.500 1.500v3M15.500 5.500v3" stroke="#aaa"/><path d="M30.500 1v1.500M30.500 4.200v1.500M30.500 7.500V9" stroke="#ccc" stroke-width="1.300"/></svg>
<svg style="left:1160px;top:314px" width="36" height="10"><circle cx="5" cy="5" r="3.500" fill="#ccc"/><path d="M3.800 4a1.200 1.200 0 1 1 1.700 1.100L5 5.800M5 7v.7" stroke="#3e3e3e" stroke-width=".8" fill="none"/><path d="M14 3h7M14 7h7M18.500 1.500v3M15.500 5.500v3" stroke="#aaa"/><path d="M30.500 1v1.500M30.500 4.200v1.500M30.500 7.500V9" stroke="#ccc" stroke-width="1.300"/></svg>
<svg style="left:1179px;top:557px" width="16" height="10"><circle cx="5" cy="5" r="3.500" fill="#ccc"/><path d="M3.800 4a1.200 1.200 0 1 1 1.700 1.100L5 5.800M5 7v.7" stroke="#3e3e3e" stroke-width=".8" fill="none"/><path d="M14 1v1.500M14 4.200v1.500M14 7.500V9" stroke="#ccc" stroke-width="1.300"/></svg>

<!-- Status bar -->
<svg style="left:1132px;top:669px" width="68" height="15">
<g fill="#c8c8c8"><circle cx="8" cy="8" r="4"/><path d="M3 3l10 10M13 3L3 13" stroke="#c8c8c8"/><rect x="20" y="3" width="9" height="3"/><rect x="20" y="7" width="9" height="2.500"/><rect x="21" y="10.500" width="8" height="3"/></g>
<circle cx="41" cy="8" r="4" fill="none" stroke="#c8c8c8" stroke-width="1.500"/><path d="M36 3l10 10" stroke="#c8c8c8"/>
<circle cx="58" cy="8" r="4.500" fill="none" stroke="#c8c8c8"/><path d="M56 8l1.500 1.500L60 6.500" fill="none" stroke="#c8c8c8"/>
</svg>
<div style="left:0;top:683px;width:1200px;height:1px;background:#777"></div>
</div></body></html>
